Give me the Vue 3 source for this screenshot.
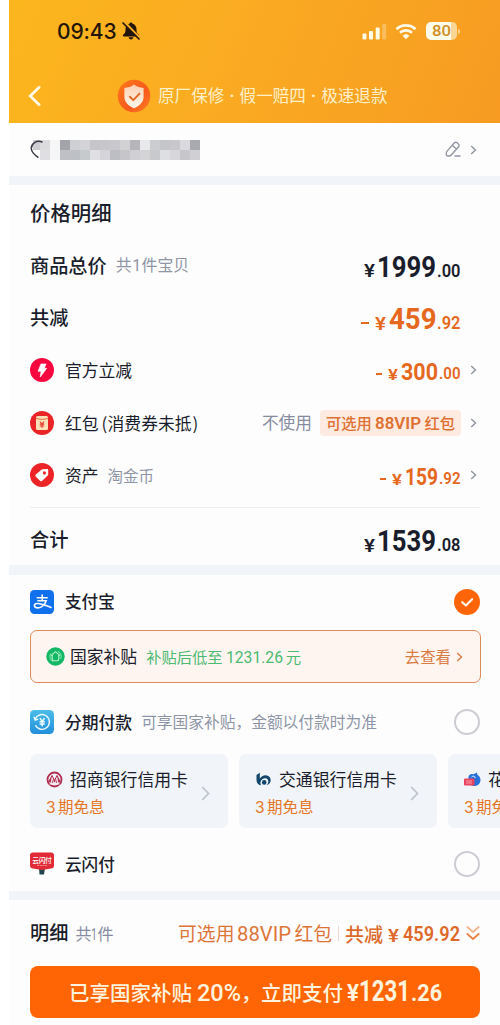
<script setup>
import { h } from 'vue'

// Figures set to a fixed width, sitting on the text baseline of their row.
const Fig = ({ t, w, s, b = 700 }) =>
  h('svg', { width: w, height: s * 0.72, style: 'overflow:visible;flex:none;display:block' }, [
    h('text', {
      x: 0, y: s * 0.72, textLength: w, lengthAdjust: 'spacingAndGlyphs',
      fill: 'currentColor', 'font-size': s, 'font-weight': b, 'font-family': 'Roboto, sans-serif'
    }, t)
  ])
Fig.props = ['t', 'w', 's', 'b']

const mosaic = [
  ['#dcdcdf', '#f6f6f7', '#a3a4aa', '#cfd0d4', '#d4d4d8', '#c6c6ca', '#c6c6cb', '#c9c9cd', '#d2d2d5', '#b5b5ba', '#e7e9eb', '#cccdd1', '#c5c6ca', '#c8c8cc', '#dadade', '#a9aab0'],
  ['#dfdfe3', '#f6f6f8', '#bfc0c5', '#bdc0c4', '#c7cacd', '#e0e0e4', '#d5d5d9', '#bdbec3', '#c5c5ca', '#d0d0d4', '#d4d4d7', '#c8c9cd', '#dedfe3', '#d7d7db', '#c7c7cb', '#d0d0d4']
]
</script>

<template>
  <div class="phone">
    <header class="head">
      <div class="status">
        <span class="clock">09:43</span>
        <svg class="bell" width="20" height="20" viewBox="0 0 20 20">
          <path d="M10 1.400c-.9 0-1.500.6-1.600 1.300C5.600 3.500 4.500 5.800 4.500 8.400c0 2.900-.6 4.100-2.300 5.300-.7.600-.4 1.700.6 1.700h14.400c1 0 1.300-1.100.6-1.700-1.700-1.200-2.300-2.400-2.300-5.300 0-2.600-1.100-4.900-3.900-5.700C11.500 2 10.900 1.400 10 1.400zM7.600 16.300h4.800c-.2 1.400-1.200 2.100-2.400 2.100s-2.200-.7-2.400-2.100z" fill="#24150a" />
          <path d="M3.600 1.300l15 15.500" stroke="#faae22" stroke-width="2.600" />
          <path d="M2 2l16 16" stroke="#24150a" stroke-width="1.700" stroke-linecap="round" />
        </svg>
        <svg class="signal" width="26" height="17" viewBox="0 0 26 17">
          <g fill="#fffbe9">
            <rect x="1.500" y="10.500" width="4" height="6" rx="1" />
            <rect x="8" y="8" width="4" height="8.500" rx="1" />
            <rect x="14.700" y="4.500" width="4" height="12" rx="1" />
            <rect x="21.200" y="1" width="4" height="15.500" rx="1" opacity=".3" />
          </g>
        </svg>
        <svg class="wifi" width="22" height="17" viewBox="0 0 22 17">
          <g fill="none" stroke="#fffbe9" stroke-width="2.700">
            <path d="M1.500 6.200a13.700 13.700 0 0 1 19 0" />
            <path d="M5 9.800a8.700 8.700 0 0 1 12 0" />
          </g>
          <path d="M7.600 12.700a5 5 0 0 1 6.800 0L11 16.300z" fill="#fffbe9" />
        </svg>
        <div class="battery"><Fig t="80" :w="19" :s="15.5" :b="500" /></div>
        <i class="nub"></i>
      </div>
      <div class="nav">
        <svg class="back" width="16" height="22" viewBox="0 0 16 22">
          <path d="M12.200 2.200L3.200 11l9 8.800" fill="none" stroke="#fffbe9" stroke-width="2.700" stroke-linecap="round" />
        </svg>
        <svg class="shield" width="34" height="34" viewBox="0 0 34 34">
          <defs>
            <linearGradient id="ring" x1="0" x2="1" y1="0" y2="1">
              <stop offset="0" stop-color="#ff7a1c" /><stop offset=".6" stop-color="#f8591b" /><stop offset="1" stop-color="#fc8324" />
            </linearGradient>
            <linearGradient id="plate" x1="0" x2="0" y1="0" y2="1">
              <stop offset="0" stop-color="#fcd0b0" /><stop offset="1" stop-color="#fff8ef" />
            </linearGradient>
          </defs>
          <circle cx="17" cy="17" r="16.300" fill="url(#ring)" />
          <path d="M17 5.500c2.800 2.100 6 3.200 9.600 3.500v9c0 5-4 8.700-9.600 11.300C11.400 26.700 7.400 23 7.400 18V9c3.600-.3 6.800-1.400 9.600-3.500z" fill="url(#plate)" />
          <path d="M12.300 17.200l4 3.900 6.700-7" fill="none" stroke="#e46b26" stroke-width="2" />
        </svg>
        <span class="promise">原厂保修<b>·</b>假一赔四<b>·</b>极速退款</span>
      </div>
    </header>

    <section class="address">
      <svg class="pin" width="10" height="20" viewBox="0 0 10 20">
        <rect x="3" width="7" height="10" fill="#ceced2" />
      </svg>
      <svg width="160" height="20" viewBox="0 0 160 20">
        <g shape-rendering="crispEdges">
          <template v-for="(row, y) in mosaic" :key="y">
            <rect v-for="(c, x) in row" :key="x" :x="x * 10" :y="y * 10" width="10" height="10" :fill="c" />
          </template>
        </g>
      </svg>
      <svg class="outline" width="14" height="20" viewBox="0 0 14 20">
        <path d="M12.500 2.200C6.500-.5 1 3.600 1.300 8.800 1.600 12 4.500 15 8.500 17.600" fill="none" stroke="#383a45" stroke-width="1.500" />
      </svg>
      <svg class="edit push" width="17" height="17" viewBox="0 0 17 17">
        <g fill="none" stroke="#8f949f" stroke-width="1.300" stroke-linejoin="round" stroke-linecap="round">
          <path d="M1.300 13.500v-1.600c0-.6.2-1 .6-1.500L9.200 2c.8-.9 2-.9 2.900-.2l1.300 1.200c.9.800.9 1.900.2 2.800L6.300 14c-.6.700-1.200 1-2 1H2.800c-.9 0-1.500-.6-1.500-1.500zM7.300 4.300l4.100 3.700M10 15h5" />
        </g>
      </svg>
      <svg class="chev" viewBox="0 0 7 10"><path d="M1.200 1l4.300 4-4.300 4" /></svg>
    </section>
    <div class="band"></div>

    <section class="prices">
      <div class="title">价格明细</div>
      <div class="row">
        <span class="h">商品总价</span><span class="note total-note">共<i>1</i>件宝贝</span>
        <div class="amt dark push"><Fig t="¥" :w="11" :s="17.5" :b="600" /><Fig t="1999" :w="59" :s="29.5" class="int" /><Fig t=".00" :w="23.5" :s="18" :b="600" /></div>
      </div>
      <div class="row">
        <span class="h">共减</span>
        <div class="amt push"><i class="minus big"></i><Fig t="¥" :w="11" :s="17.5" :b="600" /><Fig t="459" :w="47.5" :s="29.500" class="int" /><Fig t=".92" :w="23.5" :s="18" :b="600" /></div>
      </div>
      <div class="row">
        <svg class="ico" viewBox="0 0 24 24"><circle cx="12" cy="12" r="12" fill="#f8083f" /><path d="M11 6h5l-1.800 4.300h2.500L10.200 19l1-5.700H8z" fill="#fff" stroke="#fff" stroke-width=".7" stroke-linejoin="round" /></svg>
        <span class="label">官方立减</span>
        <div class="amt mid"><i class="minus"></i><Fig t="¥" :w="10" :s="15.5" :b="600" /><Fig t="300" :w="37" :s="23.5" class="int" /><Fig t=".00" :w="21.5" :s="17" :b="600" /></div>
        <svg class="chev" viewBox="0 0 7 10"><path d="M1.200 1l4.300 4-4.300 4" /></svg>
      </div>
      <div class="row">
        <svg class="ico" viewBox="0 0 24 24"><circle cx="12" cy="12" r="12" fill="#e92528" /><rect x="6" y="5" width="12" height="14" rx="1.500" fill="#fde1b8" /><path d="M6 7.500q6 2 12 0" fill="none" stroke="#ef7440" stroke-width="1" /><path d="M10 10.500l2 2.500 2-2.500M12 13v3.800M9.800 13.200h4.400M9.800 15h4.400" fill="none" stroke="#e53d2e" stroke-width="1.200" /></svg>
        <span class="label">红包<em>(</em>消费券未抵<em>)</em></span>
        <span class="unused push">不使用</span>
        <span class="vip">可选用<Fig t="88VIP" :w="46" :s="17" :b="600" />红包</span>
        <svg class="chev" viewBox="0 0 7 10"><path d="M1.200 1l4.300 4-4.300 4" /></svg>
      </div>
      <div class="row">
        <svg class="ico" viewBox="0 0 24 24"><circle cx="12" cy="12" r="12" fill="#ec2428" /><path d="M12.800 6.200l4.400-.2c.7 0 1 .4 1 1v4.500c0 .5-.2.8-.5 1.100l-5.500 5.100c-.8.700-1.500.7-2.200 0l-4.100-4c-.7-.7-.7-1.400 0-2.100l5.800-5c.3-.3.700-.4 1.100-.4z" fill="#fff" /><circle cx="14.400" cy="9.900" r="1.600" fill="#ec2428" /></svg>
        <span class="label">资产</span><span class="note coin">淘金币</span>
        <div class="amt mid"><i class="minus"></i><Fig t="¥" :w="10" :s="15.5" :b="600" /><Fig t="159" :w="33" :s="23.5" class="int" /><Fig t=".92" :w="21.5" :s="17" :b="600" /></div>
        <svg class="chev" viewBox="0 0 7 10"><path d="M1.200 1l4.300 4-4.300 4" /></svg>
      </div>
      <div class="sum">
        <span class="h">合计</span>
        <div class="amt dark push"><Fig t="¥" :w="11" :s="17.5" :b="600" /><Fig t="1539" :w="59" :s="29.5" class="int" /><Fig t=".08" :w="23.5" :s="18" :b="600" /></div>
      </div>
    </section>
    <div class="band tall"></div>

    <section class="pay">
      <div class="method ali">
        <svg class="ico" viewBox="0 0 24 24"><rect width="24" height="24" rx="4.500" fill="#1170ed" /><g fill="none" stroke="#fff" stroke-width="1.600" stroke-linecap="round"><path d="M7.200 7.800h10M12.200 5v5.300M8 10.800h8.200c-1.200 3.700-4.600 7.100-8.200 7.100-4.500 0-4.700-4-1.200-4.400 4.400-.5 9.400 2.300 14.200 4" /></g></svg>
        <span class="label med">支付宝</span>
        <svg class="radio push" viewBox="0 0 26 26"><circle cx="13" cy="13" r="13" fill="#ff6508" /><path d="M8.200 13.200l3.700 3.300 6.200-6.300" fill="none" stroke="#fff9ed" stroke-width="2.100" stroke-linecap="round" stroke-linejoin="round" /></svg>
      </div>
      <div class="subsidy">
        <svg width="19" height="19" viewBox="0 0 19 19"><circle cx="9.500" cy="9.500" r="9.200" fill="#14b765" /><path d="M7.200 14.600A5.700 5.700 0 0 1 4.600 6.600M11.800 4.300a5.700 5.700 0 0 1 2.900 7.500" fill="none" stroke="#8ceab0" stroke-width="1" /><path d="M5 8.600l4.500-3.900L14 8.600M6.200 8v4q0 1.700 1.600 1.700h3.400q1.600 0 1.600-1.700V8" fill="none" stroke="#b5f5c8" stroke-width="1.100" stroke-linejoin="round" /></svg>
        <span class="label name">国家补贴</span>
        <span class="low">补贴后低至<Fig t="1231.26" :w="57" :s="16.5" :b="400" />元</span>
        <span class="look push">去查看</span>
        <svg class="chev org" viewBox="0 0 7 10"><path d="M1.200 1l4.300 4-4.300 4" /></svg>
      </div>
      <div class="method inst">
        <svg class="ico" viewBox="0 0 24 24"><defs><linearGradient id="sky" x1="0" x2="0" y1="0" y2="1"><stop offset="0" stop-color="#4cbde9" /><stop offset="1" stop-color="#228edb" /></linearGradient></defs><rect width="24" height="24" rx="4.500" fill="url(#sky)" /><g fill="none" stroke="#effcff" stroke-width="1.400"><path d="M5.200 9A7.400 7.400 0 1 1 5.400 15.300M4 6.800l1.200 3.300 3-1" /><path d="M9.900 8.200l2.300 3.300 2.300-3.300M12.200 11.500v5M9.600 11.700h5.200M9.600 14h5.200" /></g></svg>
        <span class="label strong">分期付款</span><span class="note may">可享国家补贴，金额以付款时为准</span>
        <svg class="radio push" viewBox="0 0 26 26"><circle cx="13" cy="13" r="12" fill="none" stroke="#cbcdd3" stroke-width="2" /></svg>
      </div>
      <div class="cards">
        <div class="card">
          <div class="info">
            <div class="bank">
              <svg width="17" height="17" viewBox="0 0 17 17"><circle cx="8.500" cy="8.500" r="7" fill="none" stroke="#b12f51" stroke-width="1.800" /><path d="M2.500 11.300L6 4.500l2.500 5 2.500-5 3.500 6.800M4.700 11.200L6 8.500l1.300 2.700zM9.700 11.200L11 8.500l1.300 2.700z" fill="#b12f51" stroke="#b12f51" stroke-width="1" /><path d="M5.200 12L6.100 6.500l1.500 5.400M9.400 11.900l1.500-5.400.9 5.500M3.500 13h10" stroke="#f6e7ee" stroke-width="1" fill="none" /></svg>
              <span>招商银行信用卡</span>
            </div>
            <div class="free"><i>3</i>期免息</div>
          </div>
          <svg class="go" viewBox="0 0 9 15"><path d="M1.200 1l6.300 6.500L1.200 14" /></svg>
        </div>
        <div class="card">
          <div class="info">
            <div class="bank">
              <svg width="17" height="17" viewBox="0 0 17 17"><path d="M1.500 4L4.800 1.800v6C6.500 4.500 10.500 3.500 13.200 5c4 2.200 3 8.300-1.700 9.100 2.200-1.700 2.500-5 .4-6.400C9.700 6.400 6.200 8 5.500 11c-.2 1.300 0 2.400.6 3.400C3 14 1.500 11.800 1.500 8.700z" fill="#12466d" /><circle cx="9.200" cy="11.400" r="2.300" fill="#12466d" /></svg>
              <span>交通银行信用卡</span>
            </div>
            <div class="free"><i>3</i>期免息</div>
          </div>
          <svg class="go" viewBox="0 0 9 15"><path d="M1.200 1l6.300 6.500L1.200 14" /></svg>
        </div>
        <div class="card">
          <div class="info">
            <div class="bank">
              <svg width="17" height="17" viewBox="0 0 17 17"><path d="M4.500 7c-.7-3 2.500-5 5-3.700L13 1.500l.4 2.300c5 2.500 4 11.200-3.400 11.200-3.500 0-5.500-3-5.500-8z" fill="#2871d7" /><path d="M7.500 6c1.500-1.500 3.500-.9 3.800 1" fill="none" stroke="#e3f2ff" stroke-width="1" /><rect y="7.500" width="10.500" height="7" rx="1" fill="#e9445f" /><path d="M2 10h6M2 12h6" stroke="#fbb4be" stroke-width=".8" /></svg>
              <span>花呗</span>
            </div>
            <div class="free"><i>3</i>期免息</div>
          </div>
        </div>
      </div>
      <div class="method quick">
        <svg class="ico" viewBox="0 0 24 24"><path d="M9 16h6l-1 6.500H9.500z" fill="#244653" /><path d="M3 .5h18q3 0 3 3v10q0 3-3 3l-9 1.500-9-1.500q-3 0-3-3v-10q0-3 3-3z" fill="#e12a36" /><text x="2.300" y="10.600" textLength="19.500" font-size="6.800" font-weight="500" fill="#fff" font-family="Noto Sans CJK SC, sans-serif">云闪付</text><path d="M7 13.500h10" stroke="#f08a90" stroke-width="1" stroke-dasharray="2 .7" /></svg>
        <span class="label med">云闪付</span>
        <svg class="radio push" viewBox="0 0 26 26"><circle cx="13" cy="13" r="12" fill="none" stroke="#cbcdd3" stroke-width="2" /></svg>
      </div>
    </section>
    <div class="band"></div>

    <footer class="foot">
      <div class="line">
        <span class="h">明细</span><span class="count">共<Fig t="1" :w="6" :s="17" :b="400" />件</span>
        <span class="opt push">可选用<Fig t="88VIP" :w="54" :s="19.5" :b="400" />红包</span>
        <i class="bar"></i>
        <span class="cut">共减<Fig t="¥" :w="11" :s="18" :b="600" /><Fig t="459.92" :w="57" :s="20" :b="600" /></span>
        <svg class="down" width="14" height="16" viewBox="0 0 14 16"><path d="M.8 1.500L7 7l6.200-5.500" stroke="#f4b691" /><path d="M.8 8.500L7 14l6.200-5.500" stroke="#ed8142" /></svg>
      </div>
      <div class="buy">
        <span class="txt">已享国家补贴<Fig t="20%" :w="44" :s="23" :b="500" class="pct" /><span class="comma">，</span>立即支付</span>
        <Fig t="¥" :w="12" :s="23" /><Fig t="1231" :w="51" :s="30" /><Fig t=".26" :w="31" :s="24" class="cents" />
      </div>
    </footer>
  </div>
</template>

<style>
body { background: #fff; overflow: hidden; }
</style>

<style scoped>
.phone { box-sizing: border-box; width: 491px; height: 1025px; margin-left: 9px; overflow: hidden; background: #fdfdfd; color: #1a1d2c; font-family: "Noto Sans CJK SC", sans-serif; line-height: 1; white-space: nowrap; }
i, em { font-style: normal; }
svg { display: block; flex: none; }
.push { margin-left: auto; }
.head { height: 123px; background: linear-gradient(112deg, #fcb61d 0%, #faab22 45%, #f79b22 100%); }
.status { height: 62px; display: flex; align-items: center; padding-right: 40px; }
.clock { margin-left: 48px; width: 61px; font: 500 21px/1 Inter, sans-serif; letter-spacing: -.1px; color: #24150a; }
.bell { margin-left: 3px; }
.signal { margin-left: auto; }
.wifi { margin: 0 9px 0 8px; }
.battery { width: 31px; height: 18px; border-radius: 5px; background: linear-gradient(90deg, #fffbe9 82%, #fbd695 82%); color: #d08f25; display: flex; align-items: center; justify-content: center; }
.nub { width: 2px; height: 5px; margin-left: 1px; border-radius: 0 2px 2px 0; background: #fbd08a; }
.nav { height: 68px; display: flex; align-items: center; }
.back { margin-left: 18px; }
.shield { margin-left: 74px; }
.promise { margin-left: 7px; font-size: 16.600px; color: #fff0c9; }
.promise b { display: inline-block; width: 15.200px; text-align: center; font-family: Roboto, sans-serif; }
.address { height: 53px; display: flex; align-items: center; padding: 0 23px 0 21px; }
.outline { margin-left: -170px; }
.edit { margin-right: 8px; }
.chev { width: 7px; height: 10px; fill: none; stroke: #8f949f; stroke-width: 1.400; overflow: visible; }
.band { height: 9px; background: #f1f4f8; }
.band.tall { height: 10px; }
.prices { height: 380px; box-sizing: border-box; padding: 0 20px 0 21px; display: flex; flex-direction: column; }
.title { height: 54px; line-height: 54px; font-size: 20.400px; font-weight: 500; }
.row { height: 52.500px; display: flex; align-items: center; padding-right: 3px; }
.h { font-size: 19.200px; font-weight: 500; }
.note { font-size: 15.500px; color: #8e95a6; }
.total-note { margin-left: 9px; font-size: 15.900px; }
.note i { font-family: Roboto, sans-serif; margin: 0 .5px; }
.coin { margin-left: 9px; }
.amt { display: flex; align-items: baseline; color: #e5681e; margin-right: 17px; padding-top: 2px; }
.amt.dark { color: #1a1d2c; }
.amt .int { margin: 0 .5px 0 2.500px; }
.amt.mid { margin: 0 10px 0 auto; padding-top: 2px; }
.amt.mid .int { margin: 0 1px 0 3px; }
.minus { width: 6px; height: 2px; margin-right: 6px; transform: translateY(-5px); background: #e5681e; }
.minus.big { width: 8px; }
.ico { width: 24px; height: 24px; margin-right: 11px; }
.label { font-size: 16.800px; }
.label em { font-size: 17px; display: inline-block; width: 6px; margin-left: 3px; }
.label em + em { margin-left: 1px; }
.med { font-weight: 500; font-size: 16.600px; }
.strong { font-weight: 500; }
.unused { font-size: 16.700px; color: #858ca0; margin-right: 8px; }
.vip { box-sizing: border-box; height: 26px; width: 141px; border-radius: 4px; padding: 0 6px; margin-right: 9px; background: #fdebe2; display: flex; align-items: baseline; line-height: 25px; justify-content: space-between; color: #df7031; font-size: 15.300px; font-weight: 500; }
.sum { height: 58px; margin-top: 5px; box-sizing: border-box; border-top: 1px solid #eceef2; padding: 7px 3px 0 0; display: flex; align-items: center; }
.pay { height: 316px; padding-left: 21px; }
.method { display: flex; align-items: center; padding-right: 20px; box-sizing: border-box; }
.ali { height: 55px; padding-bottom: 2px; }
.radio { width: 26px; height: 26px; }
.subsidy { box-sizing: border-box; width: 451px; height: 53px; border: 1.500px solid #dc8b5a; border-radius: 7px; background: #fef5f0; display: flex; align-items: center; padding: 0 17px 0 15px; }
.name { margin-left: 5px; }
.low { margin-left: 9px; display: flex; align-items: baseline; gap: 3px; font-size: 15.300px; color: #4cb971; }
.look { font-size: 15.400px; color: #da7b43; margin-right: 5px; }
.org { stroke: #da7b43; }
.inst { height: 71px; padding-top: 7px; }
.may { margin-left: 9px; font-size: 15.720px; }
.cards { display: flex; gap: 11px; }
.card { box-sizing: border-box; flex: none; width: 198px; height: 74px; border-radius: 7px; background: #f1f4f8; display: flex; align-items: center; padding: 4px 18px 0 16px; justify-content: space-between; }
.bank { display: flex; align-items: center; gap: 7px; font-size: 16.850px; }
.free { margin-top: 11px; font-size: 15.500px; color: #e57728; }
.free i { display: inline-block; width: 12px; font-family: Inter, sans-serif; }
.go { width: 9px; height: 15px; fill: none; stroke: #bdc2cb; stroke-width: 1.700; }
.quick { height: 63px; padding-top: 9px; }
.foot { padding: 0 20px 0 21px; }
.line { height: 66px; display: flex; align-items: center; }
.count { margin-left: 7px; font-size: 16px; color: #858ca0; display: flex; align-items: baseline; }
.opt, .cut { display: flex; align-items: baseline; gap: 3px; color: #dd7438; font-size: 18.800px; }
.bar { width: 1px; height: 15px; margin: 0 6px; background: #ecd8cf; }
.cut { font-size: 19px; font-weight: 500; color: #dd692a; gap: 4.500px; }
.down { margin-left: 6px; fill: none; stroke-width: 1.700; }
.buy { height: 52px; box-sizing: border-box; padding-left: 39px; border-radius: 8px; background: #ff6505; color: #fff3dd; display: flex; align-items: baseline; line-height: 52px; }
.txt { display: flex; align-items: baseline; width: 278px; font-size: 20.500px; font-weight: 500; }
.pct { margin-left: 5px; }
.comma { width: 20px; }
.cents { margin-left: 1px; }
</style>
